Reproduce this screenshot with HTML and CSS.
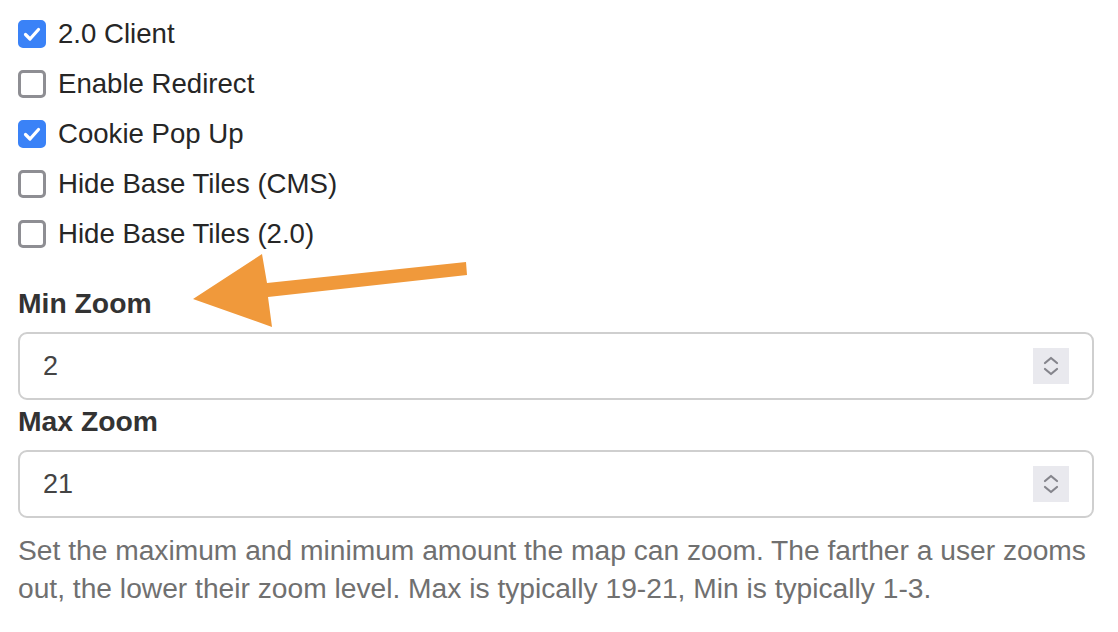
FILE: index.html
```html
<!DOCTYPE html>
<html>
<head>
<meta charset="utf-8">
<link rel="stylesheet" href="styles.css">
</head>
<body>
<div class="panel">
  <div class="checks">
    <label class="check"><span class="box on"><svg viewBox="0 0 28 28"><path d="M7.5 14.5 L12 19 L20.5 9.5" /></svg></span><span>2.0 Client</span></label>
    <label class="check"><span class="box"></span><span>Enable Redirect</span></label>
    <label class="check"><span class="box on"><svg viewBox="0 0 28 28"><path d="M7.5 14.5 L12 19 L20.5 9.5" /></svg></span><span>Cookie Pop Up</span></label>
    <label class="check"><span class="box"></span><span>Hide Base Tiles (CMS)</span></label>
    <label class="check"><span class="box"></span><span>Hide Base Tiles (2.0)</span></label>
  </div>
  <div class="field first">
    <div class="label">Min Zoom</div>
    <div class="input"><span>2</span><span class="spin"><svg viewBox="0 0 36 36"><path d="M12 15 L18 10 L24 15 M12 21 L18 26 L24 21"/></svg></span></div>
  </div>
  <div class="field">
    <div class="label">Max Zoom</div>
    <div class="input"><span>21</span><span class="spin"><svg viewBox="0 0 36 36"><path d="M12 15 L18 10 L24 15 M12 21 L18 26 L24 21"/></svg></span></div>
  </div>
  <p class="help">Set the maximum and minimum amount the map can zoom. The farther a user zooms out, the lower their zoom level. Max is typically 19-21, Min is typically 1-3.</p>
  <svg class="arrow" viewBox="0 0 1118 632"><polygon points="193,299 262,254 267,283 466,262 467,275 268,297 272,327"/></svg>
</div>
</body>
</html>
```
FILE: styles.css
```css
html, body {
  margin: 0;
  padding: 0;
  background: #fff;
}
body {
  font-family: "Liberation Sans", Arial, sans-serif;
  color: #333;
}
.panel {
  position: relative;
  width: 1118px;
  height: 632px;
  padding: 9px 24px 0 18px;
  box-sizing: border-box;
}
.checks {
  display: flex;
  flex-direction: column;
}
.check {
  display: flex;
  align-items: center;
  gap: 12px;
  height: 50px;
  font-size: 27.6px;
  color: #262626;
}
.box {
  width: 28px;
  height: 28px;
  box-sizing: border-box;
  border: 3px solid #8e8e93;
  border-radius: 5px;
  display: flex;
  flex-shrink: 0;
}
.box.on {
  background: #3a82f7;
  border-color: #3a82f7;
}
.box svg {
  width: 28px;
  height: 28px;
  margin: -3px;
  fill: none;
  stroke: #fff;
  stroke-width: 3.2;
  stroke-linecap: round;
  stroke-linejoin: round;
}
.field.first {
  margin-top: 24px;
}
.field + .field {
  margin-top: 1px;
}
.label {
  font-weight: bold;
  font-size: 28.3px;
  line-height: 40px;
  color: #333;
  margin-bottom: 9px;
}
.input {
  height: 68px;
  box-sizing: border-box;
  border: 2px solid #cfcfcf;
  border-radius: 9px;
  display: flex;
  align-items: center;
  justify-content: space-between;
  padding: 0 23px 0 23px;
  font-size: 27px;
  color: #444;
}
.spin {
  width: 36px;
  height: 36px;
  background: #e9e9ee;
  display: flex;
}
.spin svg {
  width: 36px;
  height: 36px;
  fill: none;
  stroke: #85858c;
  stroke-width: 2.2;
  stroke-linecap: round;
  stroke-linejoin: round;
}
.help {
  margin: 13px 0 0;
  font-size: 28.2px;
  line-height: 38px;
  color: #707070;
}
.arrow {
  position: absolute;
  left: 0;
  top: 0;
  width: 1118px;
  height: 632px;
  fill: #f0993b;
  pointer-events: none;
}
```
